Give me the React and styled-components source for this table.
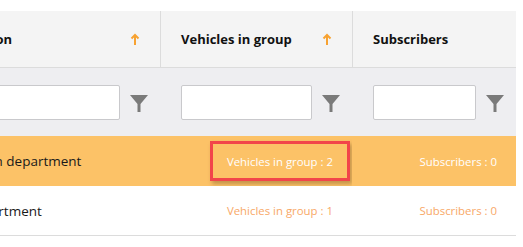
import styled, { createGlobalStyle } from "styled-components";

const GlobalStyle = createGlobalStyle`
  html, body {
    margin: 0;
    padding: 0;
    background: #fff;
    font-family: "Open Sans", "Noto Sans", sans-serif;
  }
`;

const columns = [
  { key: "name", title: "Division", sortable: true },
  { key: "vehicles", title: "Vehicles in group", sortable: true },
  { key: "subscribers", title: "Subscribers", sortable: false },
];

const rows = [
  { name: "Aviation department", vehicles: 2, subscribers: 0, selected: true },
  { name: "IT department", vehicles: 1, subscribers: 0 },
];

const SortArrow = () => (
  <svg width="10" height="13" viewBox="0 0 10 13">
    <path d="M5 12V2M1.5 5.5L5 2l3.5 3.5" fill="none" stroke="#f7a231" strokeWidth="2" />
  </svg>
);

const Funnel = () => (
  <svg width="18" height="17" viewBox="0 0 18 17">
    <path d="M0 0h18l-7.5 9v8h-3V9z" fill="#7a7a7a" />
  </svg>
);

const App = () => {
  return (
    <>
      <GlobalStyle />
      <Viewport>
        <Table>
          <HeaderRow>
            {columns.map((col) => (
              <HeaderCell key={col.key}>
                <span>{col.title}</span>
                {col.sortable && <SortArrow />}
              </HeaderCell>
            ))}
          </HeaderRow>

          <FilterRow>
            {columns.map((col) => (
              <FilterCell key={col.key}>
                <FilterInput type="text" />
                <FilterButton>
                  <Funnel />
                </FilterButton>
              </FilterCell>
            ))}
          </FilterRow>

          {rows.map((row) => (
            <BodyRow key={row.name} $selected={row.selected}>
              <NameCell>{row.name}</NameCell>
              <CountCell $selected={row.selected}>
                {row.selected ? (
                  <Highlight>Vehicles in group : {row.vehicles}</Highlight>
                ) : (
                  <>Vehicles in group : {row.vehicles}</>
                )}
              </CountCell>
              <CountCell $selected={row.selected}>
                Subscribers : {row.subscribers}
              </CountCell>
            </BodyRow>
          ))}
        </Table>
      </Viewport>
    </>
  );
};

const Viewport = styled.div`
  width: 523px;
  height: 247px;
  overflow: hidden;
  padding-top: 11px;
  box-sizing: border-box;
`;

const Table = styled.div`
  width: 576px;
  margin-left: -60px;
  display: grid;
  grid-template-columns: 220px 192px 164px;
`;

const HeaderRow = styled.div`
  display: contents;
`;

const HeaderCell = styled.div`
  height: 56px;
  background: #f4f4f4;
  border-bottom: 1px solid #dcdcdc;
  border-left: 1px solid #dcdcdc;
  display: flex;
  align-items: center;
  justify-content: space-between;
  padding: 0 20px 0 20px;
  font-size: 13px;
  font-weight: 700;
  color: #111;

  &:first-child {
    border-left: none;
  }

  svg {
    flex-shrink: 0;
    margin-top: 1px;
  }
`;

const FilterRow = styled.div`
  display: contents;
`;

const FilterCell = styled.div`
  height: 68px;
  background: #eeeef1;
  display: flex;
  align-items: center;
  gap: 10px;
  padding: 0 12px 0 21px;
`;

const FilterInput = styled.input`
  flex: 1;
  min-width: 0;
  height: 35px;
  box-sizing: border-box;
  border: 1px solid #c9c9cc;
  border-radius: 2px;
  background: #fff;
  outline: none;
`;

const FilterButton = styled.div`
  width: 18px;
  display: flex;
  align-items: center;
  justify-content: center;
  margin-top: 2px;
`;

const BodyRow = styled.div`
  display: contents;

  & > div {
    height: 50px;
    box-sizing: border-box;
    background: ${(p) => (p.$selected ? "#fcc267" : "#fff")};
    border-bottom: ${(p) => (p.$selected ? "none" : "1px solid #dcdcdc")};
  }
`;

const NameCell = styled.div`
  display: flex;
  align-items: center;
  padding-left: 12px;
  font-size: 13.5px;
  color: #1a1a1a;
`;

const CountCell = styled.div`
  display: flex;
  align-items: center;
  justify-content: flex-end;
  padding-right: 19px;
  font-size: 11.4px;
  color: ${(p) => (p.$selected ? "#fff" : "#f8a867")};
`;

const Highlight = styled.span`
  display: inline-block;
  padding: 10px 14px 9px;
  margin: -13px -17px -12px 0;
  border: 3px solid #f2454a;
  box-shadow: 2px 3px 4px rgba(90, 60, 20, 0.35);
`;

export default App;
